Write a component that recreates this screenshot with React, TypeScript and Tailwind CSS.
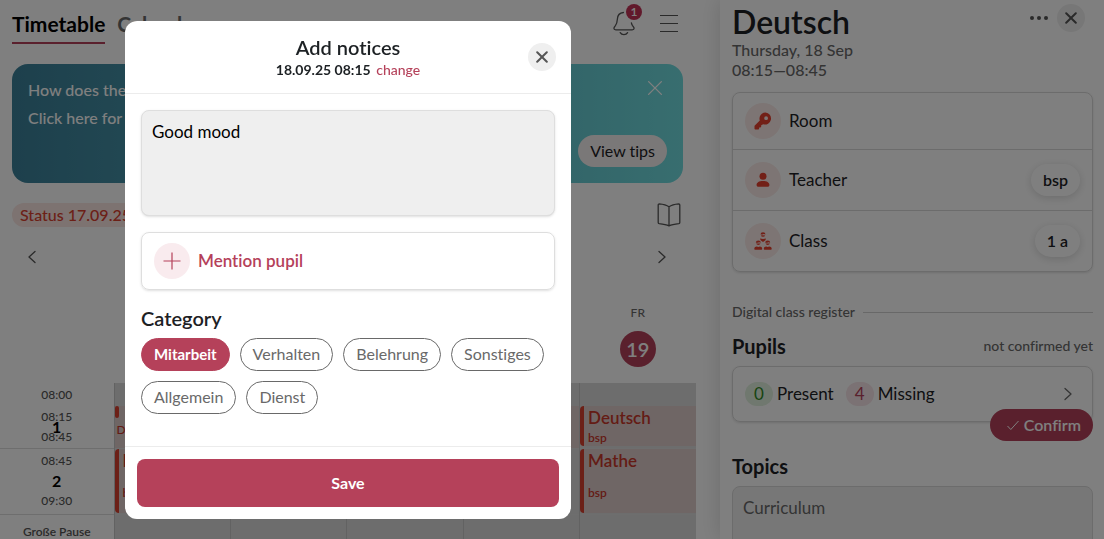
import React, { useState } from "react";
import clsx from "clsx";

const categories = [
  "Mitarbeit",
  "Verhalten",
  "Belehrung",
  "Sonstiges",
  "Allgemein",
  "Dienst",
];

const CloseIcon = ({ className }: { className?: string }) => (
  <svg
    viewBox="0 0 12 12"
    fill="none"
    stroke="currentColor"
    strokeLinecap="round"
    className={className}
    aria-hidden="true"
  >
    <path d="M1.200 1.200l9.600 9.600M10.800 1.200L1.200 10.800" />
  </svg>
);

const ChevronIcon = ({ left }: { left?: boolean }) => (
  <svg
    viewBox="0 0 24 24"
    fill="none"
    stroke="currentColor"
    strokeWidth="1.3"
    strokeLinecap="round"
    strokeLinejoin="round"
    className={clsx("size-6", left && "rotate-180")}
    aria-hidden="true"
  >
    <path d="M9 6.500l6 5.500-6 5.500" />
  </svg>
);

const BellIcon = () => (
  <svg
    viewBox="0 0 24 26"
    fill="none"
    stroke="currentColor"
    strokeWidth="1.3"
    strokeLinecap="round"
    strokeLinejoin="round"
    className="h-[26px] w-6"
    aria-hidden="true"
  >
    <path d="M11.400 2.500C7.600 2.800 5.600 5.400 5.400 9c-.2 3.200-.6 4.800-2 6.600-1 1.200-1.500 1.900-1.500 2.700 0 1 .8 1.500 1.900 1.500h16.400c1.100 0 1.900-.5 1.900-1.500 0-.9-.9-1.700-1.700-2.900-.5-.8-.8-1.600-1-2.500" />
    <path d="M8.200 22.600c.8 1.400 2 2.100 3.700 2.100s2.900-.7 3.700-2.100" />
  </svg>
);

const BookIcon = () => (
  <svg
    viewBox="0 0 24 24"
    fill="none"
    stroke="currentColor"
    strokeWidth="1.3"
    strokeLinecap="round"
    strokeLinejoin="round"
    className="size-6"
    aria-hidden="true"
  >
    <path d="M12 3.800v19M12 3.800C9.500 2 6 1.200 2.300.9 1.600.9 1.200 1.300 1.200 1.900v17.600c0 .6.4 1 1 1.100 3.800.4 7.300 1 9.800 2.200 2.500-1.200 6-1.800 9.800-2.200.6-.1 1-.5 1-1.100V1.900c0-.6-.4-1-1.100-1C18 1.200 14.500 2 12 3.800z" />
  </svg>
);

const KeyIcon = () => (
  <svg viewBox="0 0 18 18" fill="currentColor" className="size-[18px]" aria-hidden="true">
    <path
      fillRule="evenodd"
      d="M11.500.5a6 6 0 0 0-5.700 7.900L.8 13.400c-.2.2-.3.500-.3.800v2.500c0 .5.4.8.8.8h3c.5 0 .8-.4.8-.8v-1.300h1.300c.5 0 .8-.4.8-.8v-1.300l2-1.100a6 6 0 1 0 2.300-11.700zM12.100 4.300a1.900 1.900 0 1 1 0 3.800 1.900 1.900 0 0 1 0-3.800z"
    />
  </svg>
);

const PersonIcon = () => (
  <svg viewBox="0 0 16 16" fill="currentColor" className="size-4" aria-hidden="true">
    <circle cx="8" cy="4.200" r="3.500" />
    <path d="M1.600 13c0-2.500 2.500-4 6.400-4s6.400 1.500 6.400 4c0 1.200-.7 1.800-1.900 1.800h-9c-1.200 0-1.900-.6-1.900-1.800z" />
  </svg>
);

const ClassIcon = () => (
  <svg viewBox="0 0 18 18" fill="currentColor" className="size-[18px]" aria-hidden="true">
    <path d="M6.500 2.500a2.500 2.300 0 0 1 5 0l-1.700-.5-1.300.6zM6.800 3.400l2-.2 2.400.2a2.300 2 0 0 1-4.400 0z" />
    <path d="M6 6.500l3 .6 3-.6-.6 1.700L9 10 6.600 8.200z" />
    <path d="M1.800 10.700a2.500 2.300 0 0 1 5 0l-1.700-.5-1.300.6zM2.100 11.600l2-.2 2.400.2a2.300 2 0 0 1-4.400 0z" />
    <path d="M11.200 10.700a2.500 2.300 0 0 1 5 0l-1.700-.5-1.300.6zM11.500 11.600l2-.2 2.400.2a2.300 2 0 0 1-4.400 0z" />
    <path d="M.3 16.800c0-1.600 1.300-2.300 2.500-2.300l1.500.4 1.500-.4c1.200 0 2.400.7 2.400 2.300 0 .6-.4 1-1 1H1.300c-.6 0-1-.4-1-1zM9.800 16.800c0-1.600 1.200-2.300 2.400-2.300l1.500.4 1.500-.4c1.200 0 2.500.7 2.500 2.300 0 .6-.4 1-1 1h-5.900c-.6 0-1-.4-1-1z" />
  </svg>
);

type DetailRowProps = {
  icon: React.ReactNode;
  label: string;
  value?: string;
  className?: string;
};

const DetailRow = ({ icon, label, value, className }: DetailRowProps) => (
  <div className={clsx("flex items-center gap-2 px-3", className)}>
    <span className="flex size-9 items-center justify-center rounded-full bg-[#faebe8] text-[#e5402f]">
      {icon}
    </span>
    <span className="flex-1">{label}</span>
    {value && (
      <button
        type="button"
        className="h-8 rounded-full bg-white px-3 text-base font-semibold shadow-[0_2px_8px_rgba(0,0,0,0.15)]"
      >
        {value}
      </button>
    )}
  </div>
);

type LessonProps = { subject: string; teacher: string; className: string };

const Lesson = ({ subject, teacher, className }: LessonProps) => (
  <div
    className={clsx(
      "flex flex-col justify-between rounded-l-sm border-l-4 border-[#d9402f] bg-[#dfcccb] pl-1 font-semibold text-[#c8382a]",
      className
    )}
  >
    <span className="leading-6">{subject}</span>
    <span className="text-xs leading-4">{teacher}</span>
  </div>
);

const Timetable = () => (
  <table className="w-full table-fixed border-collapse">
    <colgroup>
      <col className="w-[114px]" />
      <col />
      <col />
      <col />
      <col />
      <col />
    </colgroup>
    <thead>
      <tr className="h-28">
        <td colSpan={5}></td>
        <th scope="col" className="pb-4 align-bottom font-normal text-[#696969]">
          <div className="mb-2.5 text-xs leading-4 font-medium">FR</div>
          <div className="mx-auto flex size-9 items-center justify-center rounded-full bg-[#b5415a] text-xl font-semibold text-white">
            19
          </div>
        </th>
      </tr>
    </thead>
    <tbody className="text-[#555]">
      <tr className="h-[23px]">
        <td className="p-0 text-center text-xs font-medium">08:00</td>
        <td className="border-l border-[#c4c4c4] bg-[#dadada]"></td>
        <td className="border-l border-[#c4c4c4] bg-[#dadada]"></td>
        <td className="border-l border-[#c4c4c4] bg-[#dadada]"></td>
        <td className="border-l border-[#c4c4c4] bg-[#dadada]"></td>
        <td className="border-l border-[#c4c4c4] bg-[#dadada]"></td>
      </tr>
      <tr className="h-[42px] border-b border-[#dcdcdc]">
        <td className="relative p-0 text-center text-xs leading-5 font-medium">
          <div>08:15</div>
          <div>08:45</div>
          <span className="absolute inset-0 flex items-center justify-center text-base font-bold text-black">
            1
          </span>
        </td>
        <td className="border-l border-[#c4c4c4] bg-[#dfcccb] p-0 align-top text-[#c8382a]">
          <div className="h-3 w-1 rounded-sm bg-[#d9402f]"></div>
          <div className="pl-0.5 text-xs leading-6 font-medium">D</div>
        </td>
        <td className="border-l border-[#c4c4c4] bg-[#dadada]"></td>
        <td className="border-l border-[#c4c4c4] bg-[#dadada]"></td>
        <td className="border-l border-[#c4c4c4] bg-[#dfcccb]"></td>
        <td className="border-l border-[#c4c4c4] bg-[#dadada] p-0 align-top">
          <Lesson subject="Deutsch" teacher="bsp" className="h-10" />
        </td>
      </tr>
      <tr className="h-[66px] border-b border-[#dcdcdc]">
        <td className="relative p-0 text-center text-xs font-medium">
          <div className="flex h-16 flex-col justify-between py-1">
            <span>08:45</span>
            <span>09:30</span>
          </div>
          <span className="absolute inset-0 flex items-center justify-center text-base font-bold text-black">
            2
          </span>
        </td>
        <td className="border-l border-[#c4c4c4] bg-[#dadada] p-0">
          <Lesson subject="Mathe" teacher="bsp" className="h-16 pb-3" />
        </td>
        <td className="border-l border-[#c4c4c4] bg-[#dadada]"></td>
        <td className="border-l border-[#c4c4c4] bg-[#dadada]"></td>
        <td className="border-l border-[#c4c4c4] bg-[#dadada]"></td>
        <td className="border-l border-[#c4c4c4] bg-[#dadada] p-0">
          <Lesson subject="Mathe" teacher="bsp" className="h-16 pb-3" />
        </td>
      </tr>
      <tr className="h-9">
        <td className="p-0 text-center text-xs font-semibold">Große Pause</td>
        <td className="border-l border-[#c4c4c4] bg-[#dadada]"></td>
        <td className="border-l border-[#c4c4c4] bg-[#dadada]"></td>
        <td className="border-l border-[#c4c4c4] bg-[#dadada]"></td>
        <td className="border-l border-[#c4c4c4] bg-[#dadada]"></td>
        <td className="border-l border-[#c4c4c4] bg-[#dadada]"></td>
      </tr>
    </tbody>
  </table>
);

const LessonPanel = () => (
  <aside className="w-96 shrink-0 bg-white pr-[11px] pl-3 text-[#1d2124] shadow-[0_0_20px_rgba(0,0,0,0.15)]">
    <header className="flex items-start justify-between pt-1">
      <h1 className="text-[32px] leading-9 font-semibold">Deutsch</h1>
      <div className="flex items-center gap-1.5 pr-2 text-[#555]">
        <button type="button" aria-label="More" className="flex h-7 w-6 items-center justify-center gap-[3px]">
          <span className="size-1 rounded-full bg-current"></span>
          <span className="size-1 rounded-full bg-current"></span>
          <span className="size-1 rounded-full bg-current"></span>
        </button>
        <button
          type="button"
          aria-label="Close"
          className="flex size-7 items-center justify-center rounded-full bg-[#efefef]"
        >
          <CloseIcon className="size-3 stroke-2" />
        </button>
      </div>
    </header>
    <p className="text-base leading-5 font-medium text-[#696969]">
      Thursday, 18 Sep
      <br />
      08:15—08:45
    </p>

    <div className="mt-3 divide-y divide-[#d8d8d8] rounded-lg border border-[#d8d8d8] shadow-sm">
      <DetailRow icon={<KeyIcon />} label="Room" className="h-[57px]" />
      <DetailRow icon={<PersonIcon />} label="Teacher" value="bsp" className="h-[61px]" />
      <DetailRow icon={<ClassIcon />} label="Class" value="1 a" className="h-[60px]" />
    </div>

    <div className="mt-[30px] flex items-center gap-2 text-sm font-medium text-[#696969]">
      Digital class register
      <hr className="flex-1 border-[#d0d0d0]" />
    </div>

    <div className="mt-2.5 flex items-center justify-between">
      <h2 className="text-xl leading-7 font-bold">Pupils</h2>
      <span className="text-sm font-medium text-[#696969]">not confirmed yet</span>
    </div>
    <div className="relative mt-1.5 flex h-14 items-center rounded-lg border border-[#d8d8d8] px-3 shadow-sm">
      <span className="w-7 rounded-full bg-[#e1f1de] text-center leading-6 text-[#2f8a1e]">0</span>
      <span className="ml-1">Present</span>
      <span className="ml-3 w-7 rounded-full bg-[#f6e4e8] text-center leading-6 text-[#b5415a]">4</span>
      <span className="ml-1 flex-1">Missing</span>
      <span className="text-[#696969]">
        <ChevronIcon />
      </span>
      <button
        type="button"
        className="absolute -right-px -bottom-5 flex h-8 items-center gap-1 rounded-full bg-[#b5415a] pr-3 pl-4 text-base font-semibold text-white"
      >
        <svg viewBox="0 0 14 14" fill="none" stroke="currentColor" className="size-3.5" aria-hidden="true">
          <path d="M1.500 8l3.300 3.500L12.500 3" />
        </svg>
        Confirm
      </button>
    </div>

    <h2 className="mt-[30px] text-xl leading-7 font-bold">
      <label htmlFor="topics">Topics</label>
    </h2>
    <textarea
      id="topics"
      placeholder="Curriculum"
      className="mt-1.5 block h-24 w-full resize-none rounded-lg border border-[#d8d8d8] bg-[#efefef] px-2.5 py-2 placeholder:text-[#696969]"
    />
  </aside>
);

const NoticeDialog = () => {
  const [notice, setNotice] = useState("Good mood");
  const [selected, setSelected] = useState("Mitarbeit");

  return (
    <div
      role="dialog"
      aria-labelledby="dialog-title"
      className="w-full max-w-[446px] rounded-xl bg-white text-[#1d2124]"
    >
      <header className="relative border-b border-[#ececec] pt-3.5 pb-3 text-center">
        <h2 id="dialog-title" className="text-xl leading-6 font-semibold">
          Add notices
        </h2>
        <p className="text-sm leading-[22px]">
          <span className="mr-0.5 font-bold">18.09.25 08:15</span>{" "}
          <a href="#change" className="font-medium text-[#b5415a]">
            change
          </a>
        </p>
        <button
          type="button"
          aria-label="Close"
          className="absolute inset-y-0 right-[15px] my-auto flex size-7 items-center justify-center rounded-full bg-[#efefef] text-[#555]"
        >
          <CloseIcon className="size-3 stroke-2" />
        </button>
      </header>

      <div className="px-4 pt-4 pb-8">
        <textarea
          aria-label="Notice"
          value={notice}
          onChange={(e) => setNotice(e.target.value)}
          className="block h-[106px] w-full resize-none rounded-lg border border-[#dedede] bg-[#efefef] px-2.5 py-2 text-black shadow-sm outline-none"
        />
        <button
          type="button"
          className="mt-4 flex h-[58px] w-full items-center gap-2 rounded-lg border border-[#dedede] px-3 font-semibold text-[#b5415a] shadow-sm"
        >
          <span className="flex size-9 items-center justify-center rounded-full bg-[#f9ebee]">
            <svg viewBox="0 0 18 18" stroke="currentColor" strokeWidth="1.200" className="size-[18px]" aria-hidden="true">
              <path d="M9 .5v17M.5 9h17" />
            </svg>
          </span>
          Mention pupil
        </button>

        <h3 className="mt-3.5 mb-1.5 text-xl leading-7 font-semibold">Category</h3>
        <div className="flex flex-wrap gap-2.5">
          {categories.map((category) => (
            <button
              key={category}
              type="button"
              aria-pressed={selected === category}
              onClick={() => setSelected(category)}
              className={clsx(
                "h-[33px] rounded-full border px-3",
                selected === category
                  ? "border-[#b5415a] bg-[#b5415a] text-[15px] font-bold text-white"
                  : "border-[#696969] text-base text-[#696969]"
              )}
            >
              {category}
            </button>
          ))}
        </div>
      </div>

      <footer className="border-t border-[#ececec] p-3">
        <button
          type="button"
          className="h-12 w-full rounded-lg bg-[#b5415a] text-base font-bold text-white"
        >
          Save
        </button>
      </footer>
    </div>
  );
};

export default function App() {
  return (
    <div className="flex h-screen overflow-hidden bg-white font-['Lato',sans-serif] text-[17px] [font-variant-ligatures:none]">
      <main className="min-w-0 flex-1 pr-6">
        <header className="flex items-start justify-between px-3 pt-2.5">
          <nav className="flex gap-3 text-[21px] leading-7 font-bold">
            <a href="#timetable" className="h-[34px] border-b-2 border-[#b5415a] text-black">
              Timetable
            </a>
            <a href="#calendar" className="text-[#696969]">
              Calendar
            </a>
          </nav>
          <div className="flex items-center gap-6 pr-1.5 text-[#555]">
            <button type="button" aria-label="Notifications" className="relative">
              <BellIcon />
              <span className="absolute -top-1.5 -right-1.5 size-4 rounded-full bg-[#c23357] text-xs leading-4 font-semibold text-white">
                1
              </span>
            </button>
            <button type="button" aria-label="Menu" className="flex w-[18px] flex-col gap-[7px]">
              <span className="h-px bg-current"></span>
              <span className="h-px bg-current"></span>
              <span className="h-px bg-current"></span>
            </button>
          </div>
        </header>

        <section className="mt-5 mr-[13px] ml-3 flex min-h-[119px] justify-between rounded-2xl bg-linear-to-r from-[#3b8099] to-[#70dcdf] px-4 pt-3 pb-4 text-white">
          <div className="text-base leading-7 font-medium">
            <p>How does the</p>
            <p>Click here for</p>
          </div>
          <div className="flex flex-col items-end justify-between">
            <button type="button" aria-label="Dismiss" className="p-1">
              <CloseIcon className="size-4 stroke-1" />
            </button>
            <button
              type="button"
              className="h-8 rounded-full bg-[#f4f0f0] px-3 text-base text-[#1d2124]"
            >
              View tips
            </button>
          </div>
        </section>

        <div className="mx-3 mt-5 flex items-center justify-between pr-[3px] text-[#555]">
          <span className="rounded-full bg-[#fae6e2] px-2 text-base leading-6 font-medium text-[#d9402f]">
            Status 17.09.25
          </span>
          <button type="button" aria-label="Class register">
            <BookIcon />
          </button>
        </div>
        <div className="mx-3 mt-4 flex h-7 items-center justify-between pr-2.5 pl-2 text-[#555]">
          <button type="button" aria-label="Previous week">
            <ChevronIcon left />
          </button>
          <button type="button" aria-label="Next week">
            <ChevronIcon />
          </button>
        </div>

        <Timetable />
      </main>

      <LessonPanel />

      <div className="fixed inset-0 flex items-center justify-center bg-black/50 pr-[408px]">
        <NoticeDialog />
      </div>
    </div>
  );
}
